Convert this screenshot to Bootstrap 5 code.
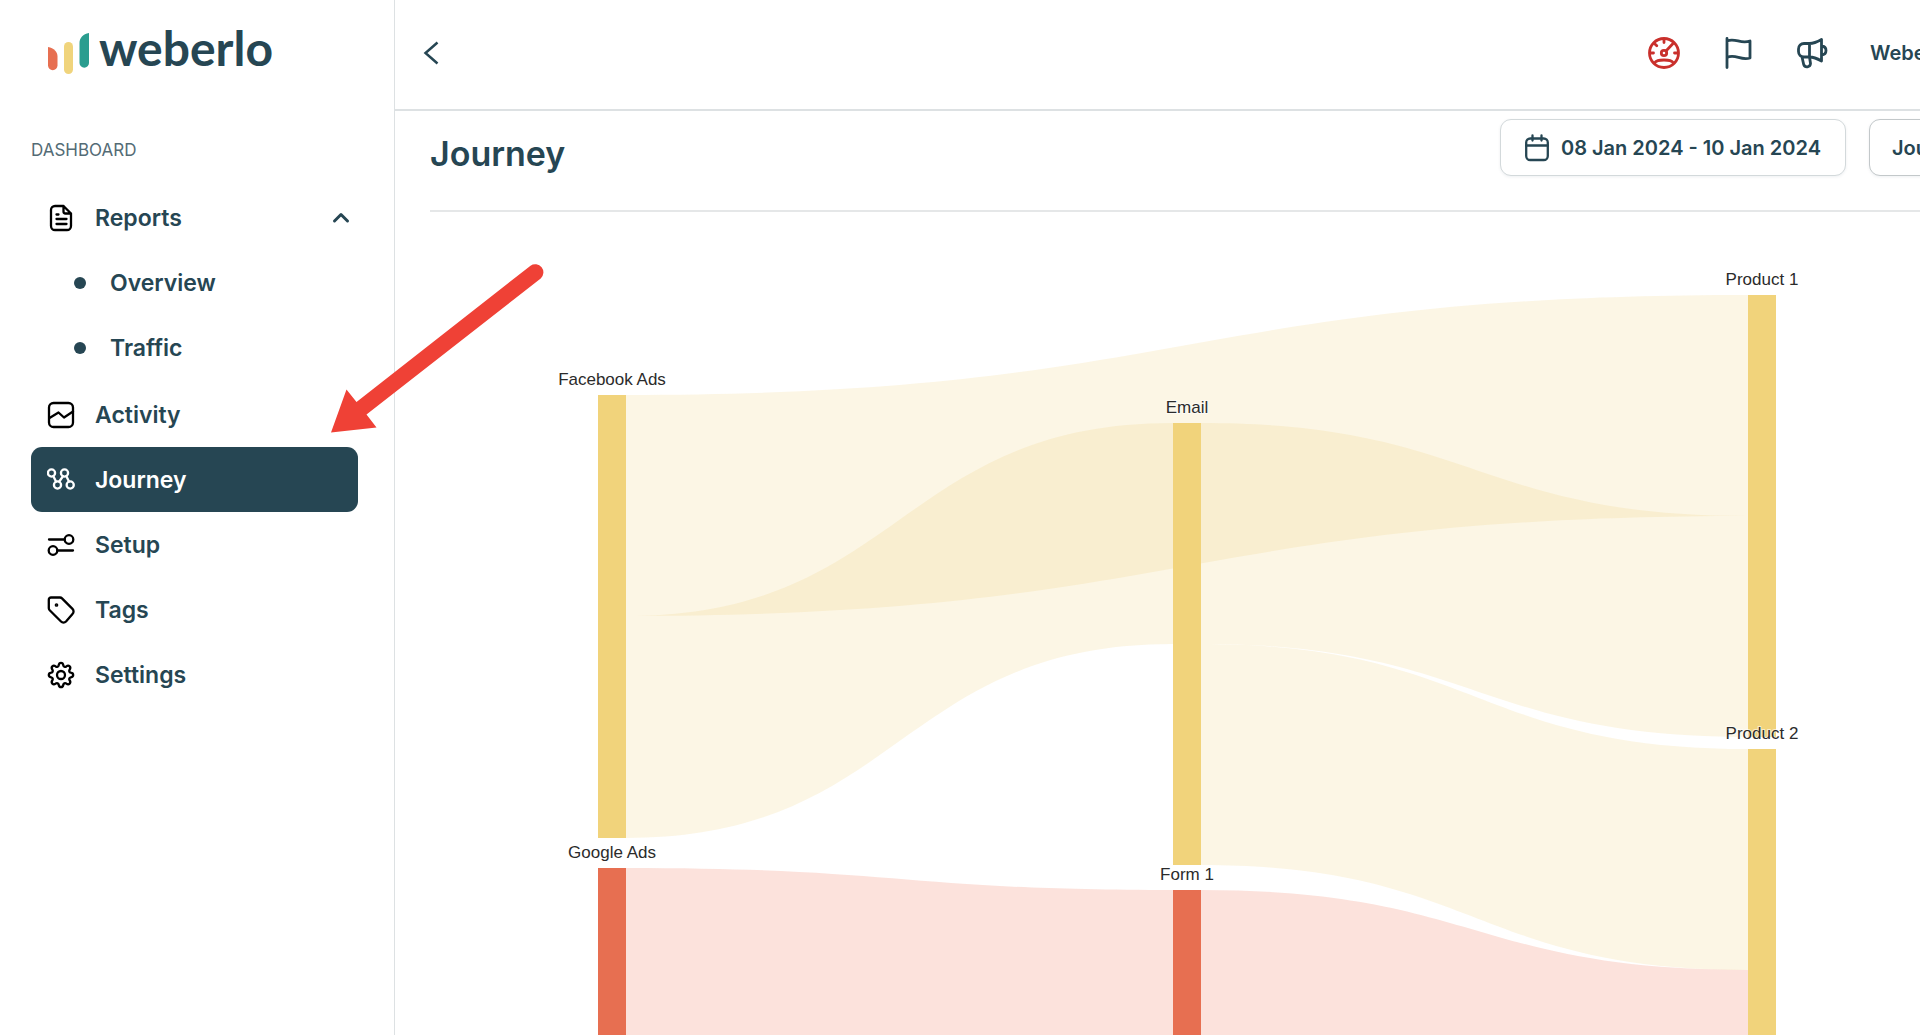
<!DOCTYPE html>
<html lang="en">
<head>
<meta charset="utf-8">
<meta name="viewport" content="width=device-width, initial-scale=1">
<title>Weberlo – Journey</title>
<link rel="stylesheet" href="https://cdn.jsdelivr.net/npm/bootstrap@5.3.0/dist/css/bootstrap.min.css">
<style>
  :root { --ink: #264653; --line: #dde1e3; }
  body { font-family: Inter, "Liberation Sans", sans-serif; color: var(--ink); background: #fff; }
  svg { display: block; flex: none; }
  .icon { fill: none; stroke: currentColor; stroke-width: 2.300; stroke-linecap: round; stroke-linejoin: round; }

  .sidebar { width: 395px; border-right: 1px solid var(--line); padding: 0 36px 32px 31px; }
  .brand { height: 109px; padding-left: 16px; color: var(--ink); gap: 8px; }
  .brand-name { font: 700 48px/48px Lato, sans-serif; }
  .brand-mark { margin-top: 7px; }
  .section-name { font-size: 17px; line-height: 24px; margin: 29px 0 23px; color: #536b75; }
  .side-link { height: 65px; padding: 0 8px 0 16px; gap: 20px; border-radius: 11px; color: var(--ink);
    font-size: 23px; font-weight: 600; line-height: 32px; width: 100%; border: 0; background: none; text-align: left; }
  .side-link .icon { color: #000; }
  .side-link .chevron { color: var(--ink); }
  .side-link.active, .side-link.active .icon { background: var(--ink); color: #fff; }
  .side-sub { margin: 0 0 2px; }
  .side-sub .side-link { padding-left: 43px; gap: 24px; }
  .bullet { width: 12px; height: 12px; border-radius: 50%; background: var(--ink); }

  .topbar { height: 111px; border-bottom: 2px solid var(--line); padding-left: 22px; padding-bottom: 4px; }
  .topbar-tools { gap: 42px; }
  .plain-btn { border: 0; background: none; padding: 0; color: var(--ink); }
  .plain-btn.alert-tone { color: #c9302c; }
  .account { width: 50px; font-size: 20px; line-height: 28px; font-weight: 600; white-space: nowrap; text-align: left; }

  .content { padding-left: 35px; }
  .title-row { padding: 8px 0 28px; border-bottom: 2px solid #e5e7e8; }
  .page-title { font-size: 34px; font-weight: 600; line-height: 57px; margin: 6px 0 0; }
  .filters { gap: 23px; }
  .filter-btn { height: 57px; border: 1px solid #d3d9db; border-radius: 11px; background: #fff; color: var(--ink);
    font-size: 20px; font-weight: 600; line-height: 28px; padding: 0 24px; gap: 12px; white-space: nowrap;
    box-shadow: 0 1px 3px rgba(38, 70, 83, .08); }
  .filter-slot { width: 51px; }
  .filter-slot .filter-btn { border-color: #c3c8ca; padding: 0 22px; }

  .journey-chart { width: 100%; height: auto; }
  .gold { fill: #f1d37b; }
  .coral { fill: #e76f51; }
  .flow { fill-opacity: .2; }
  .flow .coral { fill: #f06f51; }
  .node-name { font: 17px "Liberation Sans", Arial, sans-serif; fill: #2b2b2b; text-anchor: middle;
    paint-order: stroke; stroke: #fff; stroke-opacity: .6; stroke-width: 2px; }
  .pointer { left: 331px; top: 260px; z-index: 10; pointer-events: none; }
</style>
<script defer src="https://cdn.jsdelivr.net/npm/bootstrap@5.3.0/dist/js/bootstrap.bundle.min.js"></script>
</head>
<body>
<div class="d-flex min-vh-100 position-relative overflow-hidden">

  <aside class="sidebar flex-shrink-0">
    <a href="#" class="brand d-flex align-items-start pt-4 text-decoration-none">
      <svg class="brand-mark" width="44" height="44" viewBox="47 31 44 44" aria-hidden="true">
        <path fill="#e76f51" d="M48 47c6 1 9.500 5 9.500 9.500v9a4.750 4.750 0 0 1-9.500 0z"/>
        <rect fill="#f0d47c" x="64" y="42" width="9" height="32" rx="4.500"/>
        <path fill="#2a9d8f" d="M89 33c-6 1-9.500 5-9.500 10v20a4.750 4.750 0 0 0 9.500 0z"/>
      </svg>
      <span class="brand-name">weberlo</span>
    </a>

    <p class="section-name text-uppercase">Dashboard</p>

    <nav aria-label="Main">
      <ul class="list-unstyled mb-0">
        <li>
          <button type="button" class="side-link d-flex align-items-center" data-bs-toggle="collapse" data-bs-target="#reports" aria-expanded="true">
            <svg class="icon" width="28" height="28" viewBox="0 0 28 28" aria-hidden="true"><path d="M16.500 2H8a4 4 0 0 0-4 4v16a4 4 0 0 0 4 4h12a4 4 0 0 0 4-4V9.500zM16.500 2v5.500a2 2 0 0 0 2 2H24M9.500 10.500h2M9.500 15h10M9.500 20h10"/></svg>
            <span class="flex-grow-1">Reports</span>
            <svg class="icon chevron" width="18" height="14" viewBox="0 0 18 14" aria-hidden="true"><path stroke-width="3" d="M2.500 10 9 3.500l6.500 6.500"/></svg>
          </button>
          <ul id="reports" class="side-sub list-unstyled collapse show">
            <li><a href="#" class="side-link d-flex align-items-center text-decoration-none"><span class="bullet"></span>Overview</a></li>
            <li><a href="#" class="side-link d-flex align-items-center text-decoration-none"><span class="bullet"></span>Traffic</a></li>
          </ul>
        </li>
        <li><a href="#" class="side-link d-flex align-items-center text-decoration-none">
          <svg class="icon" width="28" height="28" viewBox="0 0 28 28" aria-hidden="true"><rect x="2" y="2" width="24" height="24" rx="4.500"/><path d="m2.500 17 9-5.500 5.500 5 9-6"/></svg>Activity</a></li>
        <li><a href="#" class="side-link active d-flex align-items-center text-decoration-none" aria-current="page">
          <svg class="icon" width="28" height="28" viewBox="0 0 28 28" aria-hidden="true"><circle cx="4.500" cy="7" r="3.600"/><circle cx="17.500" cy="7" r="3.600"/><circle cx="10.500" cy="19" r="3.600"/><circle cx="23.200" cy="19" r="3.600"/><path d="m6.500 10.500 2.500 5M15.800 10.500l-3.500 5M19.500 10.500l2.500 5"/></svg>Journey</a></li>
        <li><a href="#" class="side-link d-flex align-items-center text-decoration-none">
          <svg class="icon" width="28" height="28" viewBox="0 0 28 28" aria-hidden="true"><circle cx="22" cy="8.500" r="4.300"/><circle cx="6" cy="19.500" r="4.300"/><path d="M2 8.500h15.500M10.500 19.500H26"/></svg>Setup</a></li>
        <li><a href="#" class="side-link d-flex align-items-center text-decoration-none">
          <svg class="icon" width="28" height="28" viewBox="0 0 28 28" aria-hidden="true"><path d="M4 1.500h9a3 3 0 0 1 2 .9l10.500 10.500a3.500 3.500 0 0 1 0 5L19 25.500a3.500 3.500 0 0 1-5 0L2.700 14.200a3 3 0 0 1-.9-2V3.700A2.200 2.200 0 0 1 4 1.500z"/><circle cx="9.500" cy="9" r=".7" fill="currentColor"/></svg>Tags</a></li>
        <li><a href="#" class="side-link d-flex align-items-center text-decoration-none">
          <svg class="icon" width="28" height="28" viewBox="0 0 28 28" aria-hidden="true"><circle cx="14" cy="14" r="4"/><path d="M11.700 4.200C12.200 1 15.800 1 16.300 4.200C16.600 5.700 18 6.200 19.300 5.400C21.900 3.500 24.500 6.100 22.600 8.700C21.800 10 22.300 11.400 23.800 11.700C27 12.200 27 15.800 23.800 16.300C22.300 16.600 21.800 18 22.600 19.300C24.500 21.900 21.900 24.500 19.300 22.600C18 21.800 16.600 22.300 16.300 23.800C15.800 27 12.200 27 11.700 23.800C11.400 22.300 10 21.800 8.700 22.600C6.100 24.500 3.500 21.900 5.400 19.300C6.200 18 5.700 16.600 4.200 16.300C1 15.800 1 12.200 4.200 11.700C5.700 11.400 6.200 10 5.400 8.700C3.500 6.100 6.100 3.500 8.700 5.400C10 6.200 11.400 5.700 11.700 4.200z"/></svg>Settings</a></li>
      </ul>
    </nav>
  </aside>

  <main class="flex-grow-1 overflow-hidden">
    <header class="topbar d-flex align-items-center justify-content-between">
      <button type="button" class="plain-btn" aria-label="Back">
        <svg class="icon" width="28" height="28" viewBox="0 0 28 28"><path stroke-width="2.500" stroke-linecap="butt" stroke-linejoin="miter" d="M20.500 3.500 8.500 14l12 10.500"/></svg>
      </button>
      <div class="topbar-tools d-flex align-items-center">
        <button type="button" class="plain-btn alert-tone" aria-label="Usage">
          <svg class="icon" width="32" height="32" viewBox="0 0 32 32"><g stroke-width="2.800"><circle cx="16" cy="16" r="14.500"/><circle cx="16" cy="16" r="2.700"/><path d="m18 14 7.500-8M16 3v2.500M7.200 7.200l1.600 1.600M3 16h2.500M26.500 16H29M6.500 26c1.500-2.700 4-3 9.500-3s8 .3 9.500 3"/></g></svg>
        </button>
        <button type="button" class="plain-btn" aria-label="Milestones">
          <svg class="icon" width="32" height="32" viewBox="0 0 32 32"><path stroke-width="2.800" d="M5 1.500v29M5 4C13.500 .5 18.500 7.500 28 4v17C18.500 24 13.500 16.500 5 20.500"/></svg>
        </button>
        <button type="button" class="plain-btn" aria-label="Announcements">
          <svg class="icon" width="32" height="32" viewBox="0 0 32 32"><path stroke-width="2.800" d="M13.500 6.500H8a5.500 5.500 0 0 0-5.500 5.500v2.500A5.500 5.500 0 0 0 8 20h5.500zM13.500 6.500C18 6.500 22 4.500 25.500 2.500v21.500C22 22 18 20 13.500 20M25.500 9c6 .5 6 8.500 0 9M6 20l1.700 7.500a3.500 3.500 0 0 0 6.800-1L13.500 20"/></svg>
        </button>
        <button type="button" class="plain-btn account">Weberlo</button>
      </div>
    </header>

    <section class="content">
      <div class="title-row d-flex align-items-start justify-content-between">
        <h1 class="page-title">Journey</h1>
        <div class="filters d-flex">
          <button type="button" class="filter-btn d-flex align-items-center">
            <svg class="icon" width="24" height="28" viewBox="0 0 24 28" aria-hidden="true"><rect x="1.200" y="4.500" width="21.600" height="21.500" rx="4"/><path d="M1 11.500h22M7.500 1.500v5M16.500 1.500v5"/></svg>
            08 Jan 2024 - 10 Jan 2024
          </button>
          <div class="filter-slot"><button type="button" class="filter-btn">Journey</button></div>
        </div>
      </div>

      <svg class="journey-chart" viewBox="430 212 1490 823" role="img" aria-label="Customer journey from ad source to product">
        <g class="flow">
          <path class="gold" d="M626 395C1187 395 1187 295 1748 295V516C1187 516 1187 616 626 616z"/>
          <path class="gold" d="M626 616C900 616 900 423 1173 423V644C900 644 900 838 626 838z"/>
          <path class="gold" d="M1201 423C1475 423 1475 516 1748 516V737C1475 737 1475 644 1201 644z"/>
          <path class="gold" d="M1201 644C1475 644 1475 749 1748 749V970C1475 970 1475 865 1201 865z"/>
          <path class="coral" d="M626 868C900 868 900 890 1173 890V1332C900 1332 900 1310 626 1310z"/>
          <path class="coral" d="M1201 890C1475 890 1475 970 1748 970V1412C1475 1412 1475 1332 1201 1332z"/>
        </g>
        <g class="gold">
          <rect x="598" y="395" width="28" height="443"/>
          <rect x="1173" y="423" width="28" height="442"/>
          <rect x="1748" y="295" width="28" height="442"/>
          <rect x="1748" y="749" width="28" height="663"/>
        </g>
        <g class="coral">
          <rect x="598" y="868" width="28" height="442"/>
          <rect x="1173" y="890" width="28" height="442"/>
        </g>
        <g class="node-name">
          <text x="612" y="385">Facebook Ads</text>
          <text x="612" y="858">Google Ads</text>
          <text x="1187" y="413">Email</text>
          <text x="1187" y="880">Form 1</text>
          <text x="1762" y="285">Product 1</text>
          <text x="1762" y="739">Product 2</text>
        </g>
      </svg>
    </section>
  </main>

  <svg class="pointer position-absolute" width="215" height="175" viewBox="331 260 215 175" aria-hidden="true">
    <path fill="#ef4136" d="M331 432.500 346.500 389.500 356.500 402 530.500 265.700A8.200 8.200 0 0 1 540.700 278.500L366.500 414.500 376.500 427.500z"/>
  </svg>
</div>
</body>
</html>
